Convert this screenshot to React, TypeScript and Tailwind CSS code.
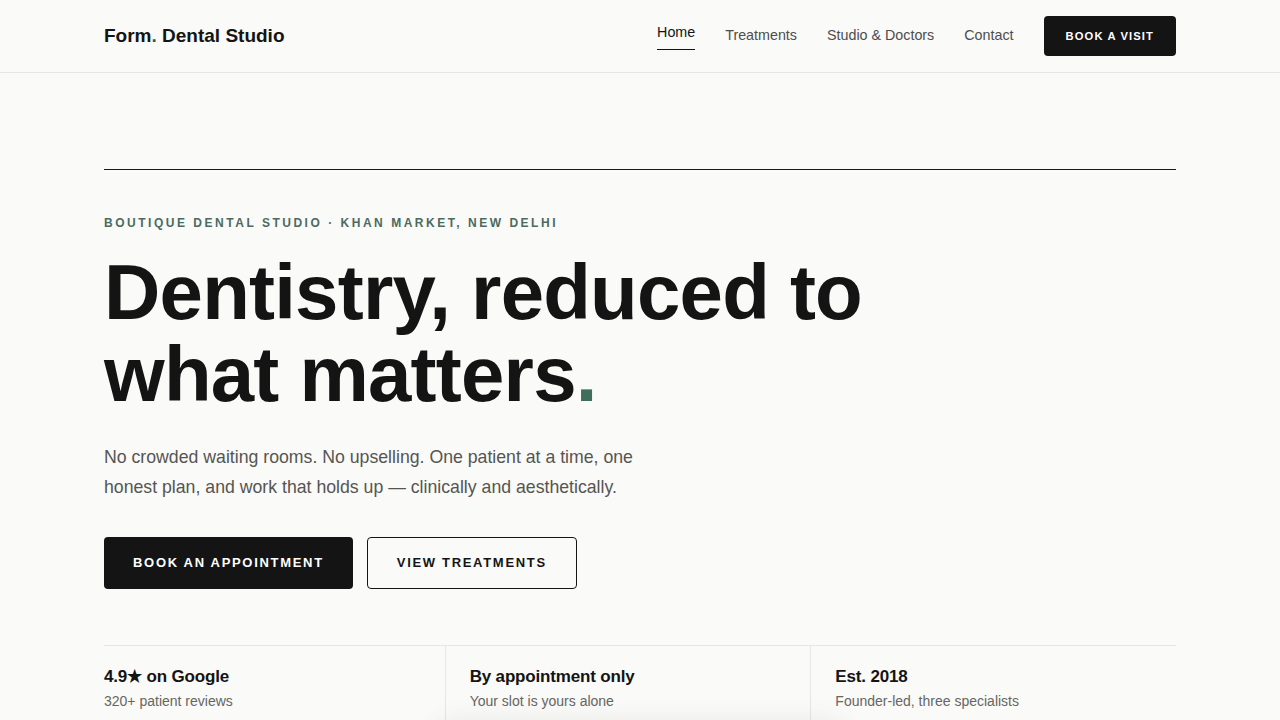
const navLinks = [
  { label: "Home", active: true },
  { label: "Treatments", active: false },
  { label: "Studio & Doctors", active: false },
  { label: "Contact", active: false },
];

const stats = [
  { title: "4.9★ on Google", sub: "320+ patient reviews" },
  { title: "By appointment only", sub: "Your slot is yours alone" },
  { title: "Est. 2018", sub: "Founder-led, three specialists" },
];

function Header() {
  return (
    <header className="border-b border-[#e6e6e3]">
      <div className="mx-auto flex h-[72px] max-w-[1072px] items-center justify-between">
        <a href="#" className="text-[19px] font-bold text-[#141414]">
          Form<span className="text-[#2d5a4c]">.</span> Dental Studio
        </a>
        <nav className="flex items-center gap-[30px]">
          {navLinks.map((link) =>
            link.active ? (
              <a
                key={link.label}
                href="#"
                className="mb-[3px] border-b-[1.5px] border-[#141414] pb-[5px] pt-[3px] text-[14.3px] text-[#141414]"
              >
                {link.label}
              </a>
            ) : (
              <a key={link.label} href="#" className="text-[14.3px] text-[#4d4d4d]">
                {link.label}
              </a>
            )
          )}
          <a
            href="#"
            className="flex h-[40px] items-center rounded-[4px] bg-[#141414] px-[22px] text-[11.2px] font-bold tracking-[0.1em] text-white"
          >
            BOOK A VISIT
          </a>
        </nav>
      </div>
    </header>
  );
}

function Hero() {
  return (
    <section className="mx-auto mt-[96px] max-w-[1072px] border-t border-[#1a1a1a] pt-[45px]">
      <p className="text-[12px] font-bold leading-[16px] tracking-[0.21em] text-[#4b6b5f]">
        BOUTIQUE DENTAL STUDIO · KHAN MARKET, NEW DELHI
      </p>
      <h1 className="mt-5 text-[78px] font-bold leading-[82px] tracking-[-0.01em] text-[#141414]">
        Dentistry, reduced to
        <br />
        what matters<span className="text-[#3f6e5d]">.</span>
      </h1>
      <p className="mt-[27px] max-w-[560px] text-[17.7px] leading-[30px] text-[#555552]">
        No crowded waiting rooms. No upselling. One patient at a time, one
        honest plan, and work that holds up — clinically and aesthetically.
      </p>
      <div className="mt-[35px] flex gap-[14px]">
        <a
          href="#"
          className="flex h-[52px] items-center rounded-[4px] bg-[#141414] px-[29px] text-[13px] font-bold tracking-[0.13em] text-white"
        >
          BOOK AN APPOINTMENT
        </a>
        <a
          href="#"
          className="flex h-[52px] items-center rounded-[4px] border border-[#141414] px-[29px] text-[13px] font-bold tracking-[0.13em] text-[#141414]"
        >
          VIEW TREATMENTS
        </a>
      </div>
    </section>
  );
}

function Stats() {
  return (
    <section className="mx-auto mt-14 flex max-w-[1072px] border-t border-[#e6e6e3]">
      {stats.map((s, i) => (
        <div
          key={s.title}
          className={`flex-1 pb-10 pt-[19px] ${i === 0 ? "pr-6" : "border-l border-[#e6e6e3] px-6"}`}
        >
          <h3 className="text-[17px] font-bold leading-[24px] tracking-[-0.01em] text-[#141414]">
            {s.title}
          </h3>
          <p className="mt-[2px] text-[14px] leading-[20px] text-[#666663]">{s.sub}</p>
        </div>
      ))}
    </section>
  );
}

export default function App() {
  return (
    <div
      className="min-h-screen bg-[#fafaf8] antialiased"
      style={{ fontFamily: '"Liberation Sans", Arial, sans-serif' }}
    >
      <Header />
      <Hero />
      <Stats />
      <div className="pointer-events-none fixed bottom-[-62px] left-1/2 h-[56px] w-[420px] -translate-x-1/2 rounded-full bg-[#fafaf8] shadow-[0_-4px_30px_rgba(0,0,0,0.08)]" />
    </div>
  );
}
